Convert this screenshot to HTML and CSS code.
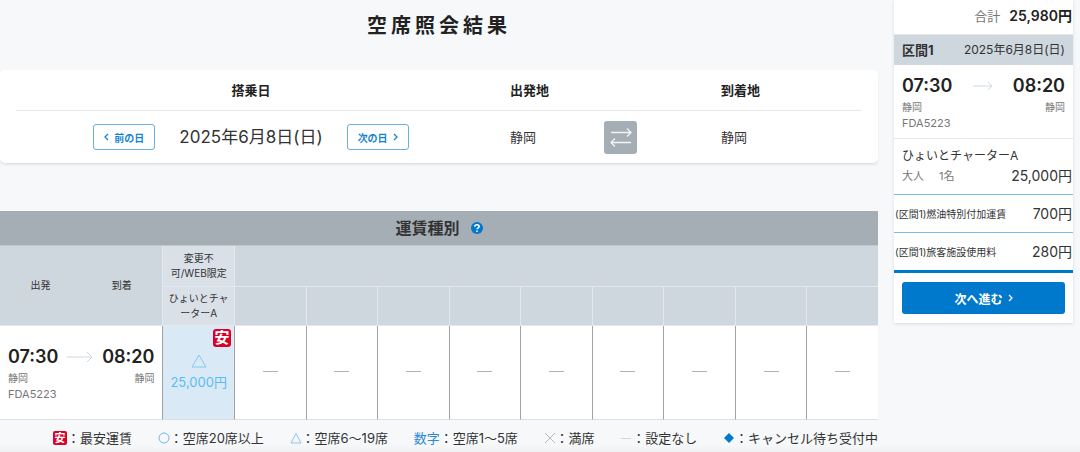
FILE: index.html
```html
<!DOCTYPE html>
<html lang="ja">
<head>
<meta charset="utf-8">
<meta name="viewport" content="width=device-width, initial-scale=1">
<title>空席照会結果</title>
<link rel="stylesheet" href="styles.css">
</head>
<body>
<div class="layout">
  <main class="main">
    <h1 class="title">空席照会結果</h1>

    <section class="search">
      <div class="search-row search-head">
        <div class="cell-date">搭乗日</div>
        <div class="cell-place">出発地</div>
        <div></div>
        <div class="cell-place">到着地</div>
      </div>
      <div class="search-row search-body">
        <div class="cell-date">
          <button class="day-btn" type="button"><svg class="chev" viewBox="0 0 5 8"><path d="M4 1 1 4l3 3"/></svg>前の日</button>
          <span class="date">2025年6月8日(日)</span>
          <button class="day-btn" type="button">次の日<svg class="chev" viewBox="0 0 5 8"><path d="m1 1 3 3-3 3"/></svg></button>
        </div>
        <div class="cell-place">静岡</div>
        <div>
          <button class="swap" type="button" aria-label="出発地と到着地を入れ替える"><svg width="22" height="20" viewBox="0 0 22 20"><path d="M1 5.500h20M17 1.500l4 4-4 4M21 15.500H1M5 11.500l-4 4 4 4"/></svg></button>
        </div>
        <div class="cell-place">静岡</div>
      </div>
    </section>

    <table class="fares">
      <colgroup>
        <col class="col-time"><col class="col-time">
        <col><col><col><col><col><col><col><col><col><col>
      </colgroup>
      <thead>
        <tr class="row-caption">
          <th colspan="12"><span class="caption">運賃種別<button class="help" type="button" aria-label="運賃種別のヘルプ"><svg width="12" height="12" viewBox="0 0 12 12"><circle cx="6" cy="6" r="6" fill="#0078cc"/><path d="M3.800 4.700C3.800 3.400 4.800 2.700 6 2.700s2.200.7 2.200 1.800C8.200 5.800 6 5.800 6 7.300M6 8.400v1.500" fill="none" stroke="#fff" stroke-width="1.500"/></svg></button></span></th>
        </tr>
        <tr class="row-group">
          <th rowspan="2">出発</th>
          <th rowspan="2">到着</th>
          <th class="fare-name">変更不<br>可/WEB限定</th>
          <th colspan="9" class="edge"></th>
        </tr>
        <tr class="row-name">
          <th class="fare-name">ひょいとチャ<br>ーターA</th>
          <th class="edge"></th><th class="edge"></th><th class="edge"></th><th class="edge"></th><th class="edge"></th><th class="edge"></th><th class="edge"></th><th class="edge"></th><th class="edge"></th>
        </tr>
      </thead>
      <tbody>
        <tr>
          <td colspan="2" class="flight-cell">
            <div class="flight">
              <div><div class="time">07:30</div><div class="port">静岡</div><div class="number">FDA5223</div></div>
              <svg class="arrow" width="26" height="12" viewBox="0 0 26 12"><path d="M0 6h25M20 1l5 5-5 5"/></svg>
              <div class="arrive"><div class="time">08:20</div><div class="port">静岡</div></div>
            </div>
          </td>
          <td class="seat chosen">
            <span class="cheap cheap-corner">安</span>
            <svg class="tri" width="16" height="14" viewBox="0 0 16 14"><path d="M8 1 15 13H1z"/></svg>
            <div class="price">25,000円</div>
          </td>
          <td class="seat"><span class="none"></span></td>
          <td class="seat"><span class="none"></span></td>
          <td class="seat"><span class="none"></span></td>
          <td class="seat"><span class="none"></span></td>
          <td class="seat"><span class="none"></span></td>
          <td class="seat"><span class="none"></span></td>
          <td class="seat"><span class="none"></span></td>
          <td class="seat"><span class="none"></span></td>
          <td class="seat"><span class="none"></span></td>
        </tr>
      </tbody>
    </table>

    <ul class="legend">
      <li><span class="cheap cheap-small">安</span>：最安運賃</li>
      <li><svg width="12" height="12" viewBox="0 0 12 12"><circle cx="6" cy="6" r="5" stroke="#75b5e6"/></svg>：空席20席以上</li>
      <li><svg width="12" height="12" viewBox="0 0 12 12"><path d="M6 1.500 11 11H1z" stroke="#8cc6ee"/></svg>：空席6〜19席</li>
      <li><span class="digits">数字</span>：空席1〜5席</li>
      <li><svg width="12" height="12" viewBox="0 0 12 12"><path d="m1 1 10 10M11 1 1 11" stroke="#b3b9bf"/></svg>：満席</li>
      <li><svg width="12" height="12" viewBox="0 0 12 12"><path d="M1 6.500h10" stroke="#d3d7db"/></svg>：設定なし</li>
      <li><svg width="12" height="12" viewBox="0 0 12 12"><path d="m6 1 5 5-5 5-5-5z" fill="#0078cc"/></svg>：キャンセル待ち受付中</li>
    </ul>
  </main>

  <aside class="summary">
    <div class="total"><span class="total-label">合計</span><strong>25,980円</strong></div>
    <div class="segment"><strong>区間1</strong><span>2025年6月8日(日)</span></div>
    <div class="flight summary-flight">
      <div><div class="time">07:30</div><div class="port">静岡</div><div class="number">FDA5223</div></div>
      <svg class="arrow" width="20" height="10" viewBox="0 0 20 10"><path d="M0 5h19M15 1l4 4-4 4"/></svg>
      <div class="arrive"><div class="time">08:20</div><div class="port">静岡</div></div>
    </div>
    <div class="fare">
      <div class="fare-title">ひょいとチャーターA</div>
      <div class="fare-line"><span class="pax"><span>大人</span><span>1名</span></span><span class="amount">25,000円</span></div>
    </div>
    <div class="charge"><span>(区間1)燃油特別付加運賃</span><span class="amount">700円</span></div>
    <div class="charge charge-last"><span>(区間1)旅客施設使用料</span><span class="amount">280円</span></div>
    <div class="action"><button class="next" type="button">次へ進む<svg class="chev" viewBox="0 0 5 8"><path d="m1 1 3 3-3 3"/></svg></button></div>
  </aside>
</div>
</body>
</html>
```

FILE: styles.css
```css
* {
  box-sizing: border-box;
}

body {
  min-height: 100vh;
  margin: 0;
  background: linear-gradient(to top, #eff1f2, #f6f8fa 8px);
  color: #333;
  font-family: Inter, "Noto Sans CJK JP", sans-serif;
  font-size: 13px;
  line-height: 20px;
}

button {
  font-family: inherit;
  cursor: pointer;
}

.layout {
  display: grid;
  grid-template-columns: minmax(0, 1fr) 179px;
  align-items: start;
  gap: 16px;
  padding-right: 7px;
}

.title {
  margin: 0;
  padding: 11px 0 29px;
  font-size: 20px;
  line-height: 30px;
  letter-spacing: 4px;
  text-align: center;
  color: #222;
}

/* Search conditions */
.search {
  padding: 0 16px;
  background: #fff;
  border-radius: 5px;
  box-shadow: 0 2px 2px #e2e4e4;
}

.search-row {
  display: grid;
  grid-template-columns: 470fr 118fr 93fr 165fr;
  align-items: center;
}

.search-head {
  height: 41px;
  border-bottom: 1px solid #e6e8ea;
  font-weight: 700;
  color: #222;
}

.search-body {
  height: 52px;
}

.cell-date {
  display: flex;
  align-items: center;
  justify-content: center;
  gap: 24px;
}

.cell-place {
  padding-left: 24px;
}

.date {
  font-size: 17px;
  white-space: nowrap;
}

.day-btn {
  display: flex;
  align-items: center;
  justify-content: center;
  gap: 5px;
  width: 62px;
  height: 26px;
  padding: 0;
  border: 1px solid #6bb0e2;
  border-radius: 3px;
  background: #fff;
  color: #1683d1;
  font-size: 10px;
  font-weight: 700;
  white-space: nowrap;
}

.chev {
  width: 5px;
  height: 8px;
  fill: none;
  stroke: currentColor;
  stroke-width: 1.3;
}

.swap {
  display: flex;
  align-items: center;
  justify-content: center;
  width: 33px;
  height: 33px;
  padding: 0;
  border: 0;
  border-radius: 3px;
  background: #a5adb5;
}

.swap svg {
  fill: none;
  stroke: #f3f5f7;
  stroke-width: 1.3;
}

/* Fare table */
.fares {
  width: 100%;
  margin-top: 48px;
  table-layout: fixed;
  border-collapse: separate;
  border-spacing: 0;
}

.col-time {
  width: 9.25%;
}

.fares th,
.fares td {
  padding: 0;
}

.fares th {
  border-bottom: 1px solid #e4e8ec;
  background: #ced6de;
  font-size: 10px;
  font-weight: 400;
  line-height: 15px;
}

.fares .row-caption th {
  height: 35px;
  border-bottom-color: #c3c8cd;
  background: #a5adb5;
  font-size: 16px;
  font-weight: 700;
}

.caption {
  display: flex;
  align-items: center;
  justify-content: center;
  gap: 11px;
}

.help {
  display: flex;
  padding: 0;
  border: 0;
  background: none;
}

.row-group th {
  height: 41px;
}

.row-name th {
  height: 39px;
}

.fares .fare-name {
  border-left: 1px solid #e4e8ec;
  background: #dae0e8;
}

.fares .edge {
  border-left: 1px solid #e4e8ec;
}

.fares td {
  height: 94px;
  border-bottom: 1px solid #dddfe1;
  background: #fff;
}

.fares .flight-cell {
  padding: 1px 8px 0;
}

.fares .seat {
  position: relative;
  padding-bottom: 3px;
  border-left: 1px solid #a3a3a3;
  text-align: center;
}

.fares .chosen {
  padding-bottom: 0;
  background: #d9eaf6;
}

.tri {
  display: block;
  margin: 0 auto 4px;
  fill: none;
  stroke: #82c9f0;
}

.price {
  color: #5bbcf0;
  font-size: 13px;
}

.none {
  display: block;
  width: 15px;
  height: 1px;
  margin: 0 auto;
  background: #b0b2b8;
}

.cheap {
  display: inline-flex;
  align-items: center;
  justify-content: center;
  border-radius: 3px;
  background: #dc0028;
  color: #fff;
  font-weight: 700;
}

.cheap-corner {
  position: absolute;
  top: 3px;
  right: 3px;
  width: 18px;
  height: 18px;
  font-size: 15px;
  line-height: 18px;
}

.cheap-small {
  width: 14px;
  height: 14px;
  border-radius: 2px;
  font-size: 11px;
  line-height: 14px;
}

/* Flight times */
.flight {
  display: flex;
  align-items: flex-start;
  justify-content: space-between;
}

.time {
  color: #222;
  font-size: 18px;
  font-weight: 600;
  line-height: 26px;
}

.port,
.number {
  color: #777;
  font-size: 10px;
  line-height: 16px;
}

.number {
  font-size: 11px;
}

.arrive {
  text-align: right;
}

.arrow {
  margin-top: 7px;
  fill: none;
  stroke: #ced8e4;
}

/* Legend */
.legend {
  display: flex;
  flex-wrap: wrap;
  justify-content: space-between;
  gap: 4px 16px;
  margin: 0;
  padding: 8px 0 4px 53px;
  list-style: none;
}

.legend li {
  display: flex;
  align-items: center;
  white-space: nowrap;
}

.legend svg {
  fill: none;
}

.digits {
  color: #2c8bd3;
}

/* Price summary */
.summary {
  background: #fff;
  box-shadow: 0 1px 3px #d9dcdf;
}

.total {
  display: flex;
  align-items: center;
  justify-content: flex-end;
  gap: 9px;
  padding: 6px 1px 8px 8px;
  border-bottom: 1px solid #e4e6e8;
}

.total-label {
  color: #777;
}

.total strong {
  color: #222;
  font-size: 14px;
  font-weight: 600;
}

.segment {
  display: flex;
  align-items: center;
  justify-content: space-between;
  padding: 5px 8px;
  background: #ced6de;
  font-size: 12px;
  white-space: nowrap;
}

.segment strong {
  font-size: 13px;
}

.summary-flight {
  padding: 8px 8px 7px;
}

.summary-flight .arrow {
  margin-top: 8px;
}

.fare {
  padding: 7px 1px 8px 8px;
  border-top: 1px solid #e4e6e8;
  border-bottom: 1px solid #7cbce9;
}

.fare-title {
  font-size: 12px;
}

.fare-line {
  display: flex;
  justify-content: space-between;
}

.pax {
  display: flex;
  gap: 15px;
  color: #777;
  font-size: 11px;
}

.amount {
  font-size: 14px;
}

.charge {
  display: flex;
  align-items: center;
  justify-content: space-between;
  padding: 9px 1px 8px;
  border-bottom: 1px solid #7cbce9;
  font-size: 10px;
  white-space: nowrap;
}

.charge-last {
  border-bottom: 3px solid #0078cc;
}

.action {
  padding: 9px 8px;
}

.next {
  display: flex;
  align-items: center;
  justify-content: center;
  gap: 5px;
  width: 100%;
  height: 32px;
  padding: 0;
  border: 0;
  border-radius: 3px;
  background: #0078cc;
  color: #fff;
  font-size: 12px;
  font-weight: 700;
}
```
